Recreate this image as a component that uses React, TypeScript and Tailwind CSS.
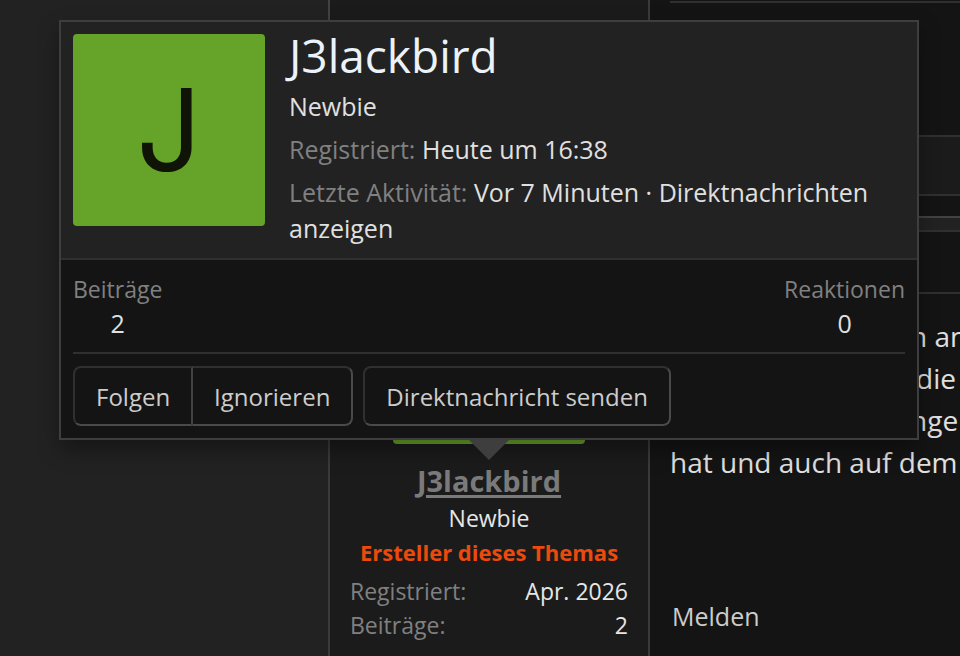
import type { ReactNode } from "react";

type StatProps = {
  label: string;
  value: string;
};

function TooltipStat({ label, value }: StatProps) {
  return (
    <div className="text-center">
      <dt className="text-[23px] leading-[34px] text-[#808080]">{label}</dt>
      <dd className="text-[25px] leading-[34px] text-[#e0e0e0]">{value}</dd>
    </div>
  );
}

function UserExtra({ label, value }: StatProps) {
  return (
    <div className="flex justify-between">
      <dt className="text-[#808080]">{label}:</dt>
      <dd className="text-[#e6e6e6]">{value}</dd>
    </div>
  );
}

function ActionButton({ className, children }: { className: string; children: ReactNode }) {
  return (
    <button
      type="button"
      className={`h-[60px] cursor-pointer border-2 border-t-[#303030] border-r-[#4a4a4a] border-b-[#4a4a4a] border-l-[#303030] px-[21px] pt-0.5 text-[24px] whitespace-nowrap text-[#cccccc] ${className}`}
    >
      {children}
    </button>
  );
}

/** Member card that opens above the avatar of the post's author. */
function MemberTooltip() {
  return (
    <div
      role="tooltip"
      className="absolute top-5 left-[59px] w-[860px] border-2 border-[#3e3e3e] bg-[#141414] shadow-[0_10px_20px_rgba(0,0,0,0.35)]"
    >
      <div className="flex gap-6 border-b-2 border-[#303030] bg-[#222222] p-3">
        <a
          href="#profil"
          aria-label="Profil von J3lackbird"
          className="flex size-48 shrink-0 items-center justify-center rounded bg-[#66a329] font-[Inter,sans-serif] text-[114px] leading-none text-[#0f1406]"
        >
          J
        </a>
        <div className="min-w-0 flex-1 text-[25px] leading-[36px] text-[#e0e0e0]">
          <h4 className="mb-3 text-[46px] leading-[42px] text-[#ebf2fa]">
            <a href="#profil">J3lackbird</a>
          </h4>
          <div>Newbie</div>
          <div className="mt-[7px]">
            <span className="text-[#808080]">Registriert:</span> Heute um 16:38
          </div>
          <div className="mt-[7px]">
            <span className="text-[#808080]">Letzte Aktivität:</span> Vor 7 Minuten ·{" "}
            <a href="#nachrichten">Direktnachrichten anzeigen</a>
          </div>
        </div>
      </div>

      <div className="p-3">
        <dl className="flex justify-between">
          <TooltipStat label="Beiträge" value="2" />
          <TooltipStat label="Reaktionen" value="0" />
        </dl>
        <hr className="mt-3 border-t-2 border-[#303030]" />
        <div className="mt-3 flex">
          <ActionButton className="rounded-l-lg border-r-[#424242]">Folgen</ActionButton>
          <ActionButton className="rounded-r-lg border-l-0">Ignorieren</ActionButton>
          <ActionButton className="ml-2.5 rounded-lg">Direktnachricht senden</ActionButton>
        </div>
      </div>

      <span className="absolute top-full left-1/2 size-0 -translate-x-1/2 border-x-22 border-t-22 border-x-transparent border-t-[#3e3e3e]" />
    </div>
  );
}

export default function App() {
  return (
    <div className="relative flex h-screen overflow-hidden bg-[#222222] font-['Open_Sans','Noto_Sans',sans-serif]">
      <aside className="w-[328px] shrink-0" />

      <main className="flex min-w-0 flex-1 flex-col gap-3">
        <article className="flex h-[218px] shrink-0 border-b-2 border-l-2 border-[#424242] bg-[#141414]">
          <div className="w-80 shrink-0 border-r-2 border-[#3a3a3a] bg-[#1b1b1b]" />
          <div className="flex-1">
            <div className="ml-5 h-[137px] border-b-2 border-[#303030] pt-px">
              <hr className="border-t-2 border-[#303030]" />
            </div>
            <div className="h-[59px] border-b-2 border-[#303030] bg-[#1b1b1b]" />
          </div>
        </article>

        <article className="flex flex-1 border-t-2 border-l-2 border-t-[#303030] border-l-[#3a3a3a] bg-[#141414]">
          <section className="w-80 shrink-0 border-r-2 border-[#3a3a3a] bg-[#1b1b1b] p-5 text-center text-[23px] leading-[34px]">
            <div className="mx-auto size-48 rounded bg-[#66a329]" />
            <h4 className="mt-[17px] text-[29px] leading-[40px] font-bold text-[#7a7a7a]">
              <a href="#profil" className="underline decoration-3 underline-offset-3">
                J3lackbird
              </a>
            </h4>
            <h5 className="text-[#e6e6e6]">Newbie</h5>
            <div className="text-[22px] font-bold text-[#eb4a0c]">Ersteller dieses Themas</div>
            <dl className="mt-[5px]">
              <UserExtra label="Registriert" value="Apr. 2026" />
              <UserExtra label="Beiträge" value="2" />
            </dl>
          </section>

          <section className="flex min-w-0 flex-1 flex-col">
            <header className="ml-5 h-[62px] border-b-2 border-[#303030]" />
            <div className="mt-[21px] flex-1 overflow-hidden pl-5 text-[28px] leading-[42px] whitespace-nowrap text-[#e0e0e0]">
              <p className="pl-60">n an</p>
              <p className="pl-[246px]">die</p>
              <p className="pl-60">nge</p>
              <p>hat und auch auf dem</p>
            </div>
            <footer className="px-[22px] pb-7 text-[25px] leading-[36px] text-[#cccccc]">
              <a href="#melden">Melden</a>
            </footer>
          </section>
        </article>
      </main>

      <MemberTooltip />
    </div>
  );
}
